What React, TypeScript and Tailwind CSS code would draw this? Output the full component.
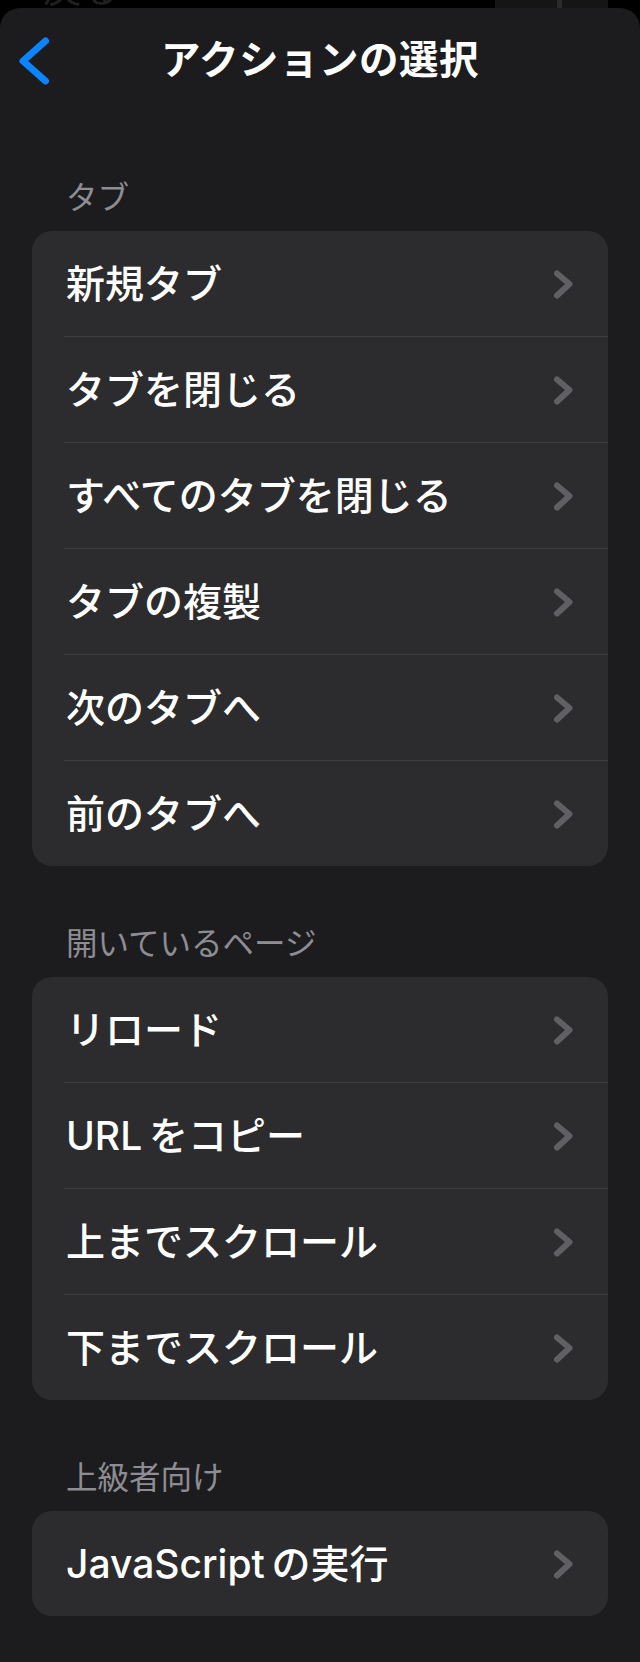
import React from 'react';

type Section = { title: string; items: string[] };

const sections: Section[] = [
  {
    title: 'タブ',
    items: ['新規タブ', 'タブを閉じる', 'すべてのタブを閉じる', 'タブの複製', '次のタブへ', '前のタブへ'],
  },
  {
    title: '開いているページ',
    items: ['リロード', 'URL\u2009をコピー', '上までスクロール', '下までスクロール'],
  },
  {
    title: '上級者向け',
    items: ['JavaScript\u2009の実行'],
  },
];

function Chevron() {
  return (
    <svg width="26" height="36" viewBox="0 0 26 36" fill="none" className="shrink-0">
      <path d="M7 7.5 L19.5 18 L7 29.5" stroke="#5f5f64" strokeWidth="6" strokeLinecap="round" strokeLinejoin="round" />
    </svg>
  );
}

function BackChevron() {
  return (
    <svg width="60" height="106" viewBox="0 0 60 106" fill="none">
      <path d="M45.5 33 L23 53 L45.5 73" stroke="#0a84ff" strokeWidth="7" strokeLinecap="round" strokeLinejoin="round" />
    </svg>
  );
}

export default function App() {
  return (
    <div
      className="flex h-[1662px] w-[640px] flex-col bg-black"
      style={{ fontFamily: 'Inter, "Noto Sans CJK JP", sans-serif' }}
    >
      {/* what peeks out from the page behind the sheet */}
      <div className="relative h-2 shrink-0 overflow-hidden">
        <span className="absolute -top-[31px] left-[18px] text-[38px] leading-[38px] text-[#202020]">‹ 戻る</span>
        <div className="absolute left-[495px] top-0 flex h-2 w-[113px] bg-[#151515]">
          <div className="ml-[62px] h-full w-[5px] bg-[#2a2a2a]" />
        </div>
      </div>

      <div className="flex flex-1 flex-col rounded-t-[20px] bg-[#1c1c1e]">
        {/* nav bar */}
        <div className="grid h-[106px] grid-cols-[1fr_auto_1fr] items-center">
          <div className="flex items-center">
            <BackChevron />
          </div>
          <h1 className="text-[39.5px] font-bold leading-none tracking-[0.5px] text-white">アクションの選択</h1>
          <div />
        </div>

        {sections.map((section, si) => (
          <div key={section.title} className={si === 0 ? 'mt-[66px]' : 'mt-[60px]'}>
            <div className="mb-[15px] px-[66px] text-[31.5px] leading-[36px] text-[#8d8d93]">{section.title}</div>
            <div className="mx-8 overflow-hidden rounded-[20px] bg-[#2c2c2e]">
              {section.items.map((item, i) => (
                <div key={item}>
                  {i > 0 && <div className="ml-8 h-px bg-[#3d3d40]" />}
                  <div className="flex h-[105px] items-center justify-between pl-[34px] pr-8">
                    <span className="text-[39px] font-medium leading-none text-white">{item}</span>
                    <Chevron />
                  </div>
                </div>
              ))}
            </div>
          </div>
        ))}
      </div>
    </div>
  );
}
